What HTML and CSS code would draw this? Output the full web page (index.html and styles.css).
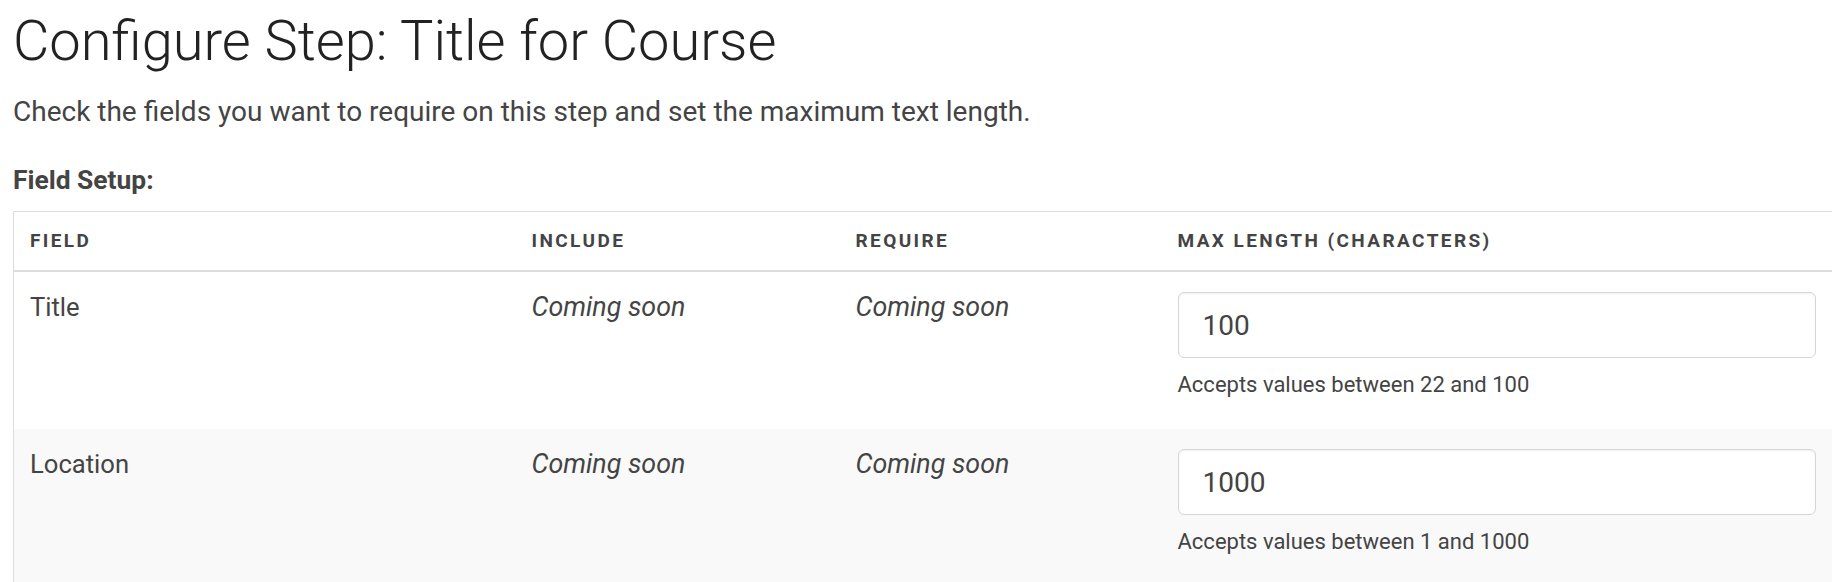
FILE: index.html
```html
<!DOCTYPE html>
<html lang="en">
<head>
    <meta charset="UTF-8">
    <title>Configure Step</title>
    <link rel="stylesheet" href="styles.css">
</head>
<body>
    <h1 class="page-title">Configure Step: Title for Course</h1>
    <p class="page-intro">Check the fields you want to require on this step and set the maximum text length.</p>
    <h3 class="section-label">Field Setup:</h3>
    <table class="field-table">
        <colgroup>
            <col class="col-field">
            <col class="col-include">
            <col class="col-require">
            <col class="col-max">
        </colgroup>
        <thead>
            <tr>
                <th>Field</th>
                <th>Include</th>
                <th>Require</th>
                <th>Max Length (characters)</th>
            </tr>
        </thead>
        <tbody>
            <tr>
                <td>Title</td>
                <td class="soon">Coming soon</td>
                <td class="soon">Coming soon</td>
                <td>
                    <input type="text" class="max-input" value="100">
                    <div class="help">Accepts values between 22 and 100</div>
                </td>
            </tr>
            <tr class="striped">
                <td>Location</td>
                <td class="soon">Coming soon</td>
                <td class="soon">Coming soon</td>
                <td>
                    <input type="text" class="max-input" value="1000">
                    <div class="help">Accepts values between 1 and 1000</div>
                </td>
            </tr>
        </tbody>
    </table>
</body>
</html>
```

FILE: styles.css
```css
body {
    margin: 0;
    padding: 0 0 0 13px;
    font-family: Roboto, "Liberation Sans", sans-serif;
    color: #444;
    overflow: hidden;
}
.page-title {
    margin: 9px 0 0 0;
    font-size: 56px;
    font-weight: 300;
    line-height: 65px;
    color: #222;
}
.page-intro {
    margin: 19px 0 0 0;
    font-size: 28px;
    line-height: 38px;
}
.section-label {
    margin: 30px 0 0 0;
    font-size: 26.4px;
    font-weight: bold;
    line-height: 38px;
}
.field-table {
    margin-top: 12px;
    width: 1820px;
    table-layout: fixed;
    border-collapse: collapse;
    border: 1px solid #ddd;
}
.col-field {
    width: 502px;
}
.col-include {
    width: 324px;
}
.col-require {
    width: 322px;
}
.field-table th {
    text-align: left;
    padding: 15px 16px;
    font-size: 19px;
    line-height: 28px;
    font-weight: bold;
    letter-spacing: 2.4px;
    text-transform: uppercase;
    color: #444;
    border-bottom: 2px solid #ddd;
}
.field-table td {
    vertical-align: top;
    padding: 16px 16px 28px 16px;
    font-size: 25.6px;
    line-height: 38px;
}
.field-table .soon {
    font-style: italic;
    font-size: 26.8px;
}
.field-table .striped td {
    background-color: #f9f9f9;
}
.max-input {
    display: block;
    box-sizing: border-box;
    width: 100%;
    height: 66px;
    padding: 0 24px;
    margin: 4px 0 0 0;
    border: 1px solid #d6d6d6;
    border-radius: 6px;
    box-shadow: inset 0 1px 2px rgba(0, 0, 0, 0.06);
    background: white;
    font-family: Roboto, "Liberation Sans", sans-serif;
    font-size: 28px;
    color: #444;
}
.help {
    margin-top: 10px;
    font-size: 22px;
    line-height: 33px;
}
```
